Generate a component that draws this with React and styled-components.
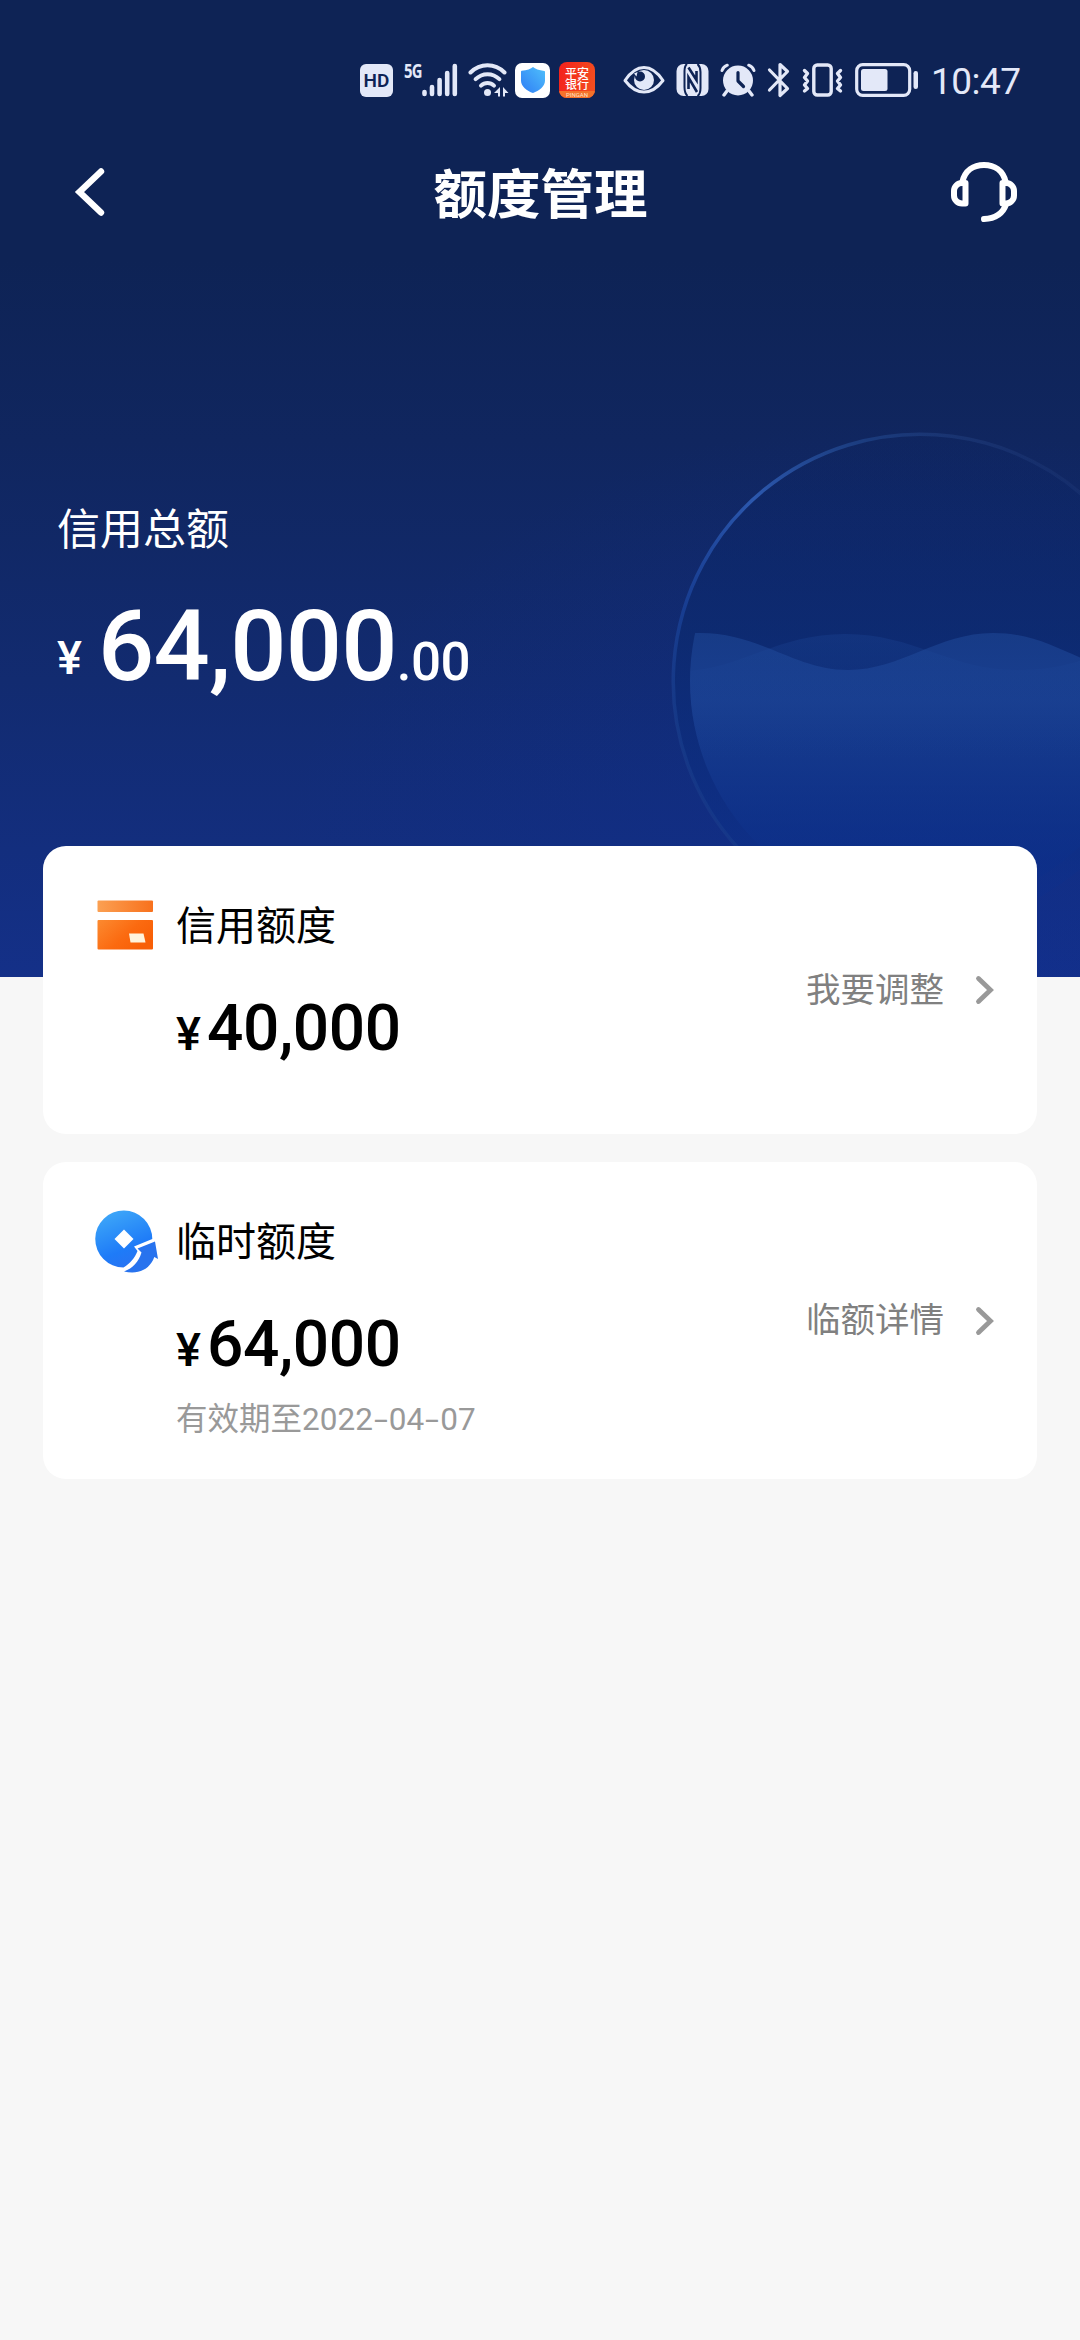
import styled, { createGlobalStyle } from 'styled-components';

const cards = [
  {
    id: 'credit',
    title: '信用额度',
    amount: '40,000',
    link: '我要调整',
    height: 288,
    icon: <CardIcon />,
  },
  {
    id: 'temporary',
    title: '临时额度',
    amount: '64,000',
    expires: ['2022', '04', '07'],
    link: '临额详情',
    height: 317,
    icon: <CoinIcon />,
  },
];

function App() {
  return (
    <Page>
      <GlobalStyle />
      <Hero>
        <Bubble />
        <StatusBar />
        <NavBar>
          <BackIcon />
          <Title>额度管理</Title>
          <HeadsetIcon />
        </NavBar>
        <Total>
          <TotalLabel>信用总额</TotalLabel>
          <TotalAmount>
            <TotalSign>¥</TotalSign>
            <TotalInteger>64,000</TotalInteger>
            <TotalCents>.00</TotalCents>
          </TotalAmount>
        </Total>
      </Hero>
      <CardList>
        {cards.map((card) => (
          <Card key={card.id} $height={card.height}>
            <IconSlot>{card.icon}</IconSlot>
            <CardBody>
              <CardTitle>{card.title}</CardTitle>
              <CardAmount>
                <CardSign>¥</CardSign>
                {card.amount}
              </CardAmount>
              {card.expires && (
                <CardNote>
                  有效期至{card.expires[0]}
                  <Dash>-</Dash>
                  {card.expires[1]}
                  <Dash>-</Dash>
                  {card.expires[2]}
                </CardNote>
              )}
            </CardBody>
            <CardLink>
              <LinkText>{card.link}</LinkText>
              <ChevronIcon />
            </CardLink>
          </Card>
        ))}
      </CardList>
    </Page>
  );
}

function StatusBar() {
  return (
    <Status>
      <HdBadge>HD</HdBadge>
      <Signal>
        <Network>5G</Network>
        <svg width="36" height="34" viewBox="0 0 36 34" stroke="#e3e8f8" strokeWidth="4.6" strokeLinecap="round">
          <path d="M2.5 29v2M10 24v7M17.6 17v14M25.2 10v21M32.8 3v28" />
        </svg>
      </Signal>
      <WifiIcon />
      <ShieldBadge>
        <svg width="26" height="28" viewBox="0 0 26 28">
          <defs>
            <linearGradient id="shield" x1="0" y1="1" x2="1" y2="0">
              <stop offset="0" stopColor="#2f7df5" />
              <stop offset="1" stopColor="#4fc0fb" />
            </linearGradient>
          </defs>
          <path
            d="M13 1c2 1.8 6 3.4 11.3 3.9q.7.1.7.9v9C25 20.5 19 24.8 13 27 7 24.8 1 20.5 1 14.7v-9q0-.8.7-.9C7 4.4 11 2.8 13 1z"
            fill="url(#shield)"
          />
        </svg>
      </ShieldBadge>
      <BankBadge>
        <BankName>平安银行</BankName>
        <BankStrip>PINGAN</BankStrip>
      </BankBadge>
      <EyeIcon />
      <NfcIcon />
      <AlarmIcon />
      <BluetoothIcon />
      <VibrateIcon />
      <BatteryIcon />
      <Clock>10:47</Clock>
    </Status>
  );
}

function WifiIcon() {
  return (
    <Wifi width="41" height="34" viewBox="0 0 41 34" fill="none" stroke="#e3e8f8" strokeWidth="4" strokeLinecap="round">
      <path d="M2.5 9.5C12-.2 27-.2 36.5 9.5" />
      <path d="M7.6 16.2c6.8-6.7 17-6.7 23.800 0" />
      <path d="M13 22.6c3.800-3.600 9.200-3.600 13 0" />
      <circle cx="19.5" cy="29.5" r="3.5" fill="#e3e8f8" stroke="none" />
      <path d="M32 24v9.500h-2V30h-4zM35 33.500V24l5.500 6H37v3.500z" fill="#e3e8f8" stroke="none" />
    </Wifi>
  );
}

function EyeIcon() {
  return (
    <Eye width="42" height="30" viewBox="0 0 42 30">
      <path
        d="M2 15.5C8 6.5 14 2.5 21 2.5s13 4 19 13C34 23.5 28 27 21 27S8 23.5 2 15.5z"
        fill="none"
        stroke="#e3e8f8"
        strokeWidth="3"
        strokeLinejoin="round"
      />
      <circle cx="21" cy="15" r="10" fill="#e3e8f8" />
      <circle cx="17" cy="11.5" r="5" fill="#0e2355" />
      <path d="M11 8.500l3.500-1.500-1 4.500z" fill="#e3e8f8" />
    </Eye>
  );
}

function NfcIcon() {
  return (
    <Nfc width="33" height="34" viewBox="0 0 33 34">
      <rect x="0.5" y="1" width="32" height="32" rx="7" fill="#e3e8f8" />
      <g fill="none" stroke="#0e2355">
        <path d="M11 1Q8.500 3 8.500 8v16q0 6 3 9M21.500 1q3 3 3 8v16q0 6-3 8" strokeWidth="2" />
        <path d="M12.500 4.500L20.500 17V8M12.500 26V14.500L21 29" strokeWidth="2.6" />
      </g>
    </Nfc>
  );
}

function AlarmIcon() {
  return (
    <Alarm width="36" height="34" viewBox="0 0 36 34" fill="none" stroke="#e3e8f8" strokeLinecap="round">
      <circle cx="18" cy="17.5" r="15" fill="#e3e8f8" stroke="none" />
      <path d="M2 7.5q1.5-4 5.300-5.300M34 7.500q-1.500-4-5.300-5.300" strokeWidth="3" />
      <path d="M7 28l-3 4M29 28l3 4" strokeWidth="3.4" />
      <path d="M18 9.5v8.500l5.500 5.500" stroke="#0e2355" strokeWidth="3.2" strokeLinejoin="round" />
    </Alarm>
  );
}

function BluetoothIcon() {
  return (
    <Bluetooth width="24" height="36" viewBox="0 0 24 36" fill="none" stroke="#e3e8f8" strokeWidth="3.2" strokeLinecap="round" strokeLinejoin="round">
      <path d="M2.5 8l18 18.5-7.500 7V2.500l7.500 7L2.500 28" />
    </Bluetooth>
  );
}

function VibrateIcon() {
  return (
    <Vibrate width="41" height="34" viewBox="0 0 41 34" fill="none" stroke="#e3e8f8" strokeWidth="3.4" strokeLinejoin="round" strokeLinecap="round">
      <rect x="11.8" y="2" width="17.4" height="30" rx="3.5" />
      <path d="M2.5 7.5l3 3-3 4 3 3.5-3 4 3 3.5-3 2.500M38.500 7.500l-3 3 3 4-3 3.500 3 4-3 3.500 3 2.500" />
    </Vibrate>
  );
}

function BatteryIcon() {
  return (
    <Battery width="64" height="34" viewBox="0 0 64 34" fill="#e3e8f8">
      <rect x="1.7" y="1.7" width="53" height="30.6" rx="6" fill="none" stroke="#e3e8f8" strokeWidth="3.2" />
      <rect x="6" y="6" width="26.5" height="22" rx="2.5" />
      <rect x="58.5" y="8" width="4.5" height="18" rx="2.2" />
    </Battery>
  );
}

function BackIcon() {
  return (
    <svg width="32" height="50" viewBox="0 0 32 50" fill="none" stroke="#fff" strokeWidth="6.4" strokeLinecap="round">
      <path d="M27 4.5L5.5 25 27 45.5" />
    </svg>
  );
}

function HeadsetIcon() {
  return (
    <svg width="68" height="62" viewBox="0 0 68 62" fill="none" stroke="#fff" strokeWidth="6" strokeLinecap="round" strokeLinejoin="round">
      <path d="M12.5 20.5C15 9.5 23.5 4 34 4s19 5.500 21.500 16.500" />
      <path d="M15.5 22v20.500H12a8 8 0 0 1-8-8V30a8 8 0 0 1 8-8z" />
      <path d="M52.5 22v20.500H56a8 8 0 0 0 8-8V30a8 8 0 0 0-8-8z" />
      <path d="M56 43.5C53 52 45.5 57.5 34 58" />
    </svg>
  );
}

// Glass ball with two crossing waves behind the total
function Bubble() {
  return (
    <BubbleLayer width="440" height="577" viewBox="640 400 440 577" fill="none">
      <defs>
        <linearGradient id="rim" x1="690" y1="800" x2="1060" y2="460" gradientUnits="userSpaceOnUse">
          <stop offset="0" stopColor="#1f4690" stopOpacity="0.35" />
          <stop offset="0.25" stopColor="#1b459f" stopOpacity="0.7" />
          <stop offset="0.5" stopColor="#2c58ae" />
          <stop offset="0.75" stopColor="#1f4489" stopOpacity="0.7" />
          <stop offset="1" stopColor="#2a4585" stopOpacity="0.2" />
        </linearGradient>
        <linearGradient id="inside" x1="0" y1="433" x2="0" y2="929" gradientUnits="userSpaceOnUse">
          <stop offset="0" stopColor="#0c2462" stopOpacity="0.2" />
          <stop offset="0.4" stopColor="#0c2a70" stopOpacity="0.8" />
          <stop offset="0.8" stopColor="#0c2f86" stopOpacity="0.6" />
          <stop offset="1" stopColor="#0d3090" stopOpacity="0.3" />
        </linearGradient>
        <linearGradient id="water" x1="0" y1="633" x2="0" y2="860" gradientUnits="userSpaceOnUse">
          <stop offset="0" stopColor="#1b4290" stopOpacity="0.7" />
          <stop offset="0.3" stopColor="#1a4092" stopOpacity="0.9" />
          <stop offset="1" stopColor="#0c2f8a" stopOpacity="0.5" />
        </linearGradient>
        <linearGradient id="backWater" x1="0" y1="633" x2="0" y2="760" gradientUnits="userSpaceOnUse">
          <stop offset="0" stopColor="#1d4799" stopOpacity="0.32" />
          <stop offset="1" stopColor="#1b4493" stopOpacity="0" />
        </linearGradient>
        <clipPath id="ball">
          <circle cx="920" cy="681" r="230" />
        </clipPath>
      </defs>
      <circle cx="920" cy="681" r="247" fill="url(#inside)" />
      <g clipPath="url(#ball)">
        <path d="M680 633h20c60 0 95 37 148 37s90-37 145-37c45 0 70 20 107 32v312H680z" fill="url(#water)" />
        <path d="M680 671c60 0 95-37 165-37s105 36 172 36c40 0 60-8 83-16v260H680z" fill="url(#backWater)" />
      </g>
      <path d="M738 848A247 247 0 1 1 1120 536" stroke="url(#rim)" strokeWidth="3.5" />
    </BubbleLayer>
  );
}

function CardIcon() {
  return (
    <svg width="66" height="66" viewBox="0 0 66 66">
      <defs>
        <linearGradient id="stripe" x1="0" y1="0" x2="1" y2="0">
          <stop offset="0" stopColor="#fba052" />
          <stop offset="1" stopColor="#f8711d" />
        </linearGradient>
        <linearGradient id="plate" x1="0" y1="0" x2="1" y2="0.6">
          <stop offset="0" stopColor="#fc8a30" />
          <stop offset="0.6" stopColor="#fb6a10" />
          <stop offset="1" stopColor="#f85f06" />
        </linearGradient>
      </defs>
      <rect x="4.5" y="7.5" width="55.5" height="11.5" rx="1" fill="url(#stripe)" />
      <rect x="4.5" y="27" width="55.5" height="29.5" rx="1" fill="url(#plate)" />
      <path d="M36 40.5h14.500l2 9H37.500z" fill="#fff3dc" />
    </svg>
  );
}

function CoinIcon() {
  return (
    <svg width="66" height="66" viewBox="0 0 66 66">
      <defs>
        <linearGradient id="coin" x1="0.2" y1="0" x2="0.6" y2="1">
          <stop offset="0" stopColor="#3fa9f8" />
          <stop offset="0.7" stopColor="#1e7bf8" />
          <stop offset="1" stopColor="#2873f2" />
        </linearGradient>
      </defs>
      <path
        d="M31 1.5A28.5 28.5 0 0 1 59.3 30L41 37.500l3.500 4.500c-3 7.500-7.500 12.500-14 16.500A28.5 28.5 0 0 1 31 1.5z"
        fill="url(#coin)"
      />
      <path d="M31 20.5l9.500 9.500-9.500 9.500-9.500-9.500z" fill="#fff" />
      <path d="M44.500 39.500L62 32.500l3 17.500-3.700-2C57 60 46 66 31 62.500 40 59 45.500 53 48.500 43.500z" fill="#2873ee" />
    </svg>
  );
}

function ChevronIcon() {
  return (
    <svg width="20" height="32" viewBox="0 0 20 32" fill="none" stroke="#999" strokeWidth="4.8" strokeLinecap="round">
      <path d="M3.5 4.5L15.5 16l-12 11.500" />
    </svg>
  );
}

const GlobalStyle = createGlobalStyle`
  body {
    margin: 0;
    background: #f7f7f7;
    font-family: Roboto, 'Noto Sans CJK SC', sans-serif;
  }
  svg {
    display: block;
    flex: none;
  }
`;

const Page = styled.div`
  width: 1080px;
  min-height: 2340px;
  background: #f7f7f7;
`;

const Hero = styled.header`
  position: relative;
  height: 977px;
  color: #fff;
  background:
    radial-gradient(620px 460px at 900px 880px, rgba(14, 46, 148, 0.4), rgba(14, 46, 148, 0)),
    linear-gradient(180deg, #0e2355 0, #0e2355 260px, #10265f 440px, #122b70 680px, #132e7e 850px, #143088 977px);
`;

const BubbleLayer = styled.svg`
  position: absolute;
  right: 0;
  bottom: 0;
`;

const Status = styled.div`
  display: flex;
  align-items: center;
  height: 160px;
  padding-left: 360px;
  color: #e3e8f8;
`;

const HdBadge = styled.div`
  width: 33px;
  height: 33px;
  border-radius: 6px;
  background: #e3e8f8;
  color: #0e2355;
  font-size: 19px;
  font-weight: 600;
  line-height: 34px;
  text-align: center;
`;

const Signal = styled.div`
  display: flex;
  align-items: flex-start;
  margin-left: 11px;
`;

const Network = styled.span`
  width: 18px;
  font: 700 19px/16px 'Noto Sans', sans-serif;
  letter-spacing: -1px;
  transform: scaleX(0.78);
  transform-origin: left;
`;

const Wifi = styled.svg`
  margin-left: 10px;
`;

const ShieldBadge = styled.div`
  display: grid;
  place-items: center;
  width: 35px;
  height: 35px;
  margin-left: 6px;
  border-radius: 7px;
  background: #fff;
`;

const BankBadge = styled.div`
  display: flex;
  flex-direction: column;
  align-items: center;
  width: 36px;
  height: 36px;
  margin-left: 9px;
  padding-top: 5px;
  box-sizing: border-box;
  border-radius: 8px;
  overflow: hidden;
  background: linear-gradient(100deg, #f3201c, #f4511f);
`;

const BankName = styled.span`
  width: 24px;
  font: 500 12px/11px 'Noto Sans CJK SC', sans-serif;
  word-break: break-all;
  color: #fff;
`;

const BankStrip = styled.span`
  width: 100%;
  margin-top: 2px;
  background: #f4722b;
  color: #ffe3c8;
  font-size: 6px;
  line-height: 8px;
  text-align: center;
`;

const Eye = styled.svg`
  margin-left: 28px;
`;

const Nfc = styled.svg`
  margin-left: 11px;
`;

const Alarm = styled.svg`
  margin-left: 11px;
`;

const Bluetooth = styled.svg`
  margin-left: 11px;
`;

const Vibrate = styled.svg`
  margin-left: 11px;
`;

const Battery = styled.svg`
  margin-left: 12px;
`;

const Clock = styled.time`
  margin: 3px 0 0 12px;
  font-size: 37px;
  line-height: 40px;
  letter-spacing: -0.5px;
`;

const NavBar = styled.nav`
  display: flex;
  align-items: center;
  justify-content: space-between;
  height: 64px;
  padding: 0 62px 0 74px;
`;

const Title = styled.h1`
  margin: 8px 0 0 25px;
  font-size: 53.5px;
  font-weight: 700;
  line-height: 60px;
`;

const Total = styled.section`
  padding: 276px 57px 0;
`;

const TotalLabel = styled.div`
  font-size: 43px;
  line-height: 60px;
`;

const TotalAmount = styled.div`
  display: flex;
  align-items: baseline;
  margin-top: 26px;
  font-weight: 500;
  line-height: 120px;
`;

const TotalSign = styled.span`
  position: relative;
  top: -6px;
  width: 41px;
  font-size: 47px;
`;

const TotalInteger = styled.span`
  font-size: 99px;
  letter-spacing: -0.8px;
`;

const TotalCents = styled.span`
  font-size: 53px;
  letter-spacing: -0.5px;
`;

const CardList = styled.main`
  position: relative;
  display: flex;
  flex-direction: column;
  gap: 28px;
  margin-top: -131px;
  padding: 0 43px;
`;

const Card = styled.section`
  display: flex;
  height: ${(props) => props.$height}px;
  border-radius: 23px;
  background: #fff;
`;

const IconSlot = styled.div`
  width: 133px;
  padding: 47px 0 0 50px;
  box-sizing: border-box;
`;

const CardBody = styled.div`
  flex: 1;
  padding-top: 51px;
`;

const CardTitle = styled.h2`
  margin: 0;
  font-size: 40px;
  font-weight: 400;
  line-height: 60px;
  color: #000;
`;

const CardAmount = styled.div`
  margin-top: 32px;
  font-size: 64px;
  font-weight: 500;
  line-height: 80px;
  letter-spacing: -0.4px;
  color: #000;
`;

const CardSign = styled.span`
  display: inline-block;
  width: 31px;
  font-size: 47px;
`;

const CardNote = styled.div`
  margin-top: 10px;
  font-size: 31.5px;
  line-height: 40px;
  color: #999;
`;

const Dash = styled.span`
  display: inline-block;
  width: 16px;
  text-align: center;
  transform: scaleX(1.6);
`;

const CardLink = styled.a`
  display: flex;
  align-items: center;
  gap: 31px;
  padding-right: 42px;
  color: #808080;
`;

const LinkText = styled.span`
  padding-bottom: 7px;
  font-size: 34.5px;
`;

export default App;
